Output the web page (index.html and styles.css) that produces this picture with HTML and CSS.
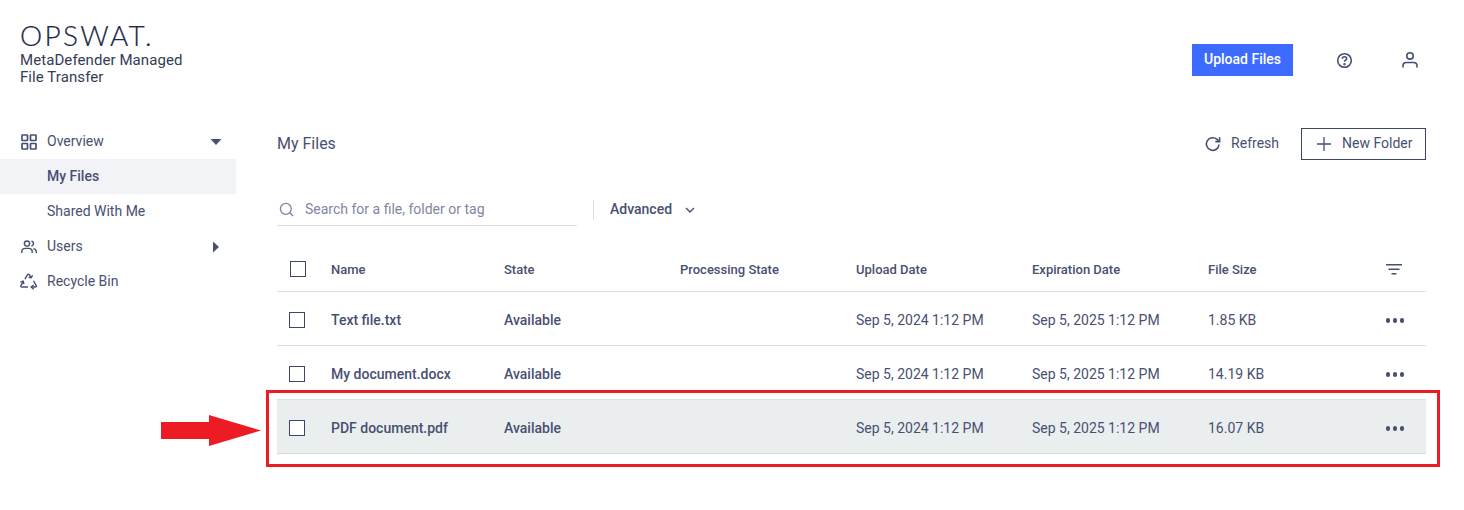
FILE: index.html
```html
<!DOCTYPE html>
<html lang="en">
<head>
<meta charset="utf-8">
<title>My Files</title>
<link rel="stylesheet" href="styles.css">
</head>
<body>
<div class="app">
  <aside class="sidebar">
    <div class="brand">
      <div class="logo">OPSWAT.</div>
      <div class="product">MetaDefender Managed<br>File Transfer</div>
    </div>
    <nav class="nav">
      <div class="nav-item">
        <svg class="nav-icon" viewBox="0 0 16 16" fill="none" stroke="currentColor" stroke-width="1.7"><rect x="1" y="1" width="5.500" height="5.500" rx=".5"/><rect x="9.500" y="1" width="5.500" height="5.500" rx=".5"/><rect x="1" y="9.500" width="5.500" height="5.500" rx=".5"/><rect x="9.500" y="9.500" width="5.500" height="5.500" rx=".5"/></svg>
        <span>Overview</span>
        <svg class="caret" viewBox="0 0 12 12" fill="currentColor"><path d="M.5 3h11L6 9z"/></svg>
      </div>
      <div class="nav-item active"><span>My Files</span></div>
      <div class="nav-item"><span>Shared With Me</span></div>
      <div class="nav-item">
        <svg class="nav-icon" viewBox="0 0 16 16" fill="none" stroke="currentColor" stroke-width="1.400"><circle cx="6" cy="4.600" r="2.600"/><path d="M.8 14v-1.200c0-2 1.600-3.400 3.600-3.400h3.200c2 0 3.600 1.400 3.600 3.400V14"/><path d="M10.400 2.200c1.300.2 2.100 1.200 2.100 2.400s-.8 2.200-2.100 2.400"/><path d="M12.400 9.600c1.700.3 2.900 1.600 2.900 3.200V14"/></svg>
        <span>Users</span>
        <svg class="caret" viewBox="0 0 12 12" fill="currentColor"><path d="M3 .5v11L9 6z"/></svg>
      </div>
      <div class="nav-item">
        <svg class="nav-icon recycle" viewBox="0 0 20 20" fill="none" stroke="currentColor" stroke-width="1.500"><path d="M6.200 7.600 9 2.800c.4-.7 1.500-.7 1.900 0l1.800 3"/><path d="M14.300 3.600l-1.500 2.400-2.700-.5"/><path d="M15.200 9.200l3 5.100c.4.700-.1 1.500-.9 1.500h-3.500"/><path d="M15.500 18.200l-2.700-2.400 2.600-2.100"/><path d="M9.500 15.800H2.900c-.8 0-1.300-.8-.9-1.500l2.300-4"/><path d="M1.400 10.600l3-.9.800 3"/></svg>
        <span>Recycle Bin</span>
      </div>
    </nav>
  </aside>

  <div class="content">
    <header class="topbar">
      <button class="upload">Upload Files</button>
      <svg class="top-icon help" viewBox="0 0 18 18" fill="none" stroke="currentColor" stroke-width="1.700"><circle cx="9" cy="9" r="7.200"/><path d="M6.700 7.100c0-1.300 1-2.100 2.300-2.100s2.300.8 2.300 2c0 1.700-2.300 1.700-2.300 3.400"/><circle cx="9" cy="12.900" r=".5" fill="currentColor"/></svg>
      <svg class="top-icon user" viewBox="0 0 18 18" fill="none" stroke="currentColor" stroke-width="1.600"><circle cx="9" cy="4.900" r="3.200"/><path d="M2 16.500v-1.700c0-2 1.500-3.300 3.400-3.300h7.200c1.900 0 3.400 1.300 3.400 3.300v1.700"/></svg>
    </header>

    <main class="main">
      <div class="title-row">
        <h1 class="title">My Files</h1>
        <div class="actions">
          <button class="refresh">
            <svg class="refresh-icon" viewBox="0 0 16 16" fill="none" stroke="currentColor" stroke-width="1.600"><path d="M14 8.500A6.300 6.300 0 1 1 12 3.400L14.300 5.500"/><path d="M14.600 1.200v4.400h-4.300"/></svg>
            <span class="btn-label">Refresh</span>
          </button>
          <button class="new-folder">
            <svg class="plus" viewBox="0 0 14 14" fill="none" stroke="currentColor" stroke-width="1.300"><path d="M7 0v14M0 7h14"/></svg>
            <span class="btn-label">New Folder</span>
          </button>
        </div>
      </div>

      <div class="filters">
        <div class="search">
          <svg class="search-icon" viewBox="0 0 16 16" fill="none" stroke="currentColor" stroke-width="1.400"><circle cx="7.300" cy="7.300" r="5.800"/><path d="M11.500 11.500 15 15"/></svg>
          <span>Search for a file, folder or tag</span>
        </div>
        <div class="divider"></div>
        <div class="advanced">Advanced
          <svg class="chev" viewBox="0 0 10 6" fill="none" stroke="currentColor" stroke-width="1.400"><path d="M1 1l4 4 4-4"/></svg>
        </div>
      </div>

      <div class="table">
        <div class="row head">
          <span class="check"></span><span>Name</span><span>State</span><span>Processing State</span><span>Upload Date</span><span>Expiration Date</span><span>File Size</span>
          <svg class="filter" viewBox="0 0 16 12" fill="currentColor"><rect x="0" y="0" width="16" height="1.500"/><rect x="2.500" y="4.500" width="11" height="1.500"/><rect x="5.500" y="9" width="5" height="1.500"/></svg>
        </div>
        <div class="row">
          <span class="check"></span><span class="strong">Text file.txt</span><span class="strong">Available</span><span></span><span>Sep 5, 2024 1:12 PM</span><span>Sep 5, 2025 1:12 PM</span><span>1.85 KB</span>
          <span class="more"><i></i><i></i><i></i></span>
        </div>
        <div class="row">
          <span class="check"></span><span class="strong">My document.docx</span><span class="strong">Available</span><span></span><span>Sep 5, 2024 1:12 PM</span><span>Sep 5, 2025 1:12 PM</span><span>14.19 KB</span>
          <span class="more"><i></i><i></i><i></i></span>
        </div>
        <div class="row selected">
          <span class="check"></span><span class="strong">PDF document.pdf</span><span class="strong">Available</span><span></span><span>Sep 5, 2024 1:12 PM</span><span>Sep 5, 2025 1:12 PM</span><span>16.07 KB</span>
          <span class="more"><i></i><i></i><i></i></span>
        </div>
      </div>
    </main>
  </div>
</div>

<div class="callout-frame"></div>
<svg class="callout-arrow" viewBox="0 0 100 31" fill="#ed1c24"><path d="M0 7h48V0l52 15.500L48 31v-7H0z"/></svg>
</body>
</html>
```

FILE: styles.css
```css
* { box-sizing: border-box; }

html, body {
  margin: 0;
  height: 510px;
  overflow: hidden;
  background: #fff;
}

body {
  font-family: Roboto, "Liberation Sans", sans-serif;
  font-size: 14px;
  color: #485071;
}

button {
  font: inherit;
  color: inherit;
  background: none;
  border: 0;
  padding: 0;
}

.app {
  display: flex;
  height: 510px;
}

.sidebar {
  width: 236px;
  flex: none;
}

.brand {
  padding: 19px 0 0 20px;
  height: 124px;
}

.logo {
  font-family: Lato, sans-serif;
  font-weight: 300;
  font-size: 28px;
  line-height: 33px;
  letter-spacing: 2.300px;
  color: #1d2a44;
  -webkit-text-stroke: 0.2px #1d2a44;
}

.product {
  font-size: 15px;
  line-height: 17px;
  letter-spacing: 0.08px;
  color: #333c55;
}

.nav-item {
  display: flex;
  align-items: center;
  height: 35px;
  padding: 0 0 2px 47px;
  position: relative;
}

.nav-item.active {
  background: #f2f3f7;
  font-weight: 500;
}

.nav-icon {
  position: absolute;
  left: 21px;
  top: 10px;
  width: 16px;
  height: 16px;
}

.nav-icon.recycle {
  left: 19px;
  top: 8px;
  width: 19px;
  height: 19px;
}

.caret {
  position: absolute;
  left: 210px;
  top: 12px;
  width: 12px;
  height: 12px;
}

.content {
  flex: 1;
  min-width: 0;
}

.topbar {
  display: flex;
  align-items: center;
  justify-content: flex-end;
  height: 124px;
  padding: 44px 45px 48px 0;
}

.upload {
  width: 101px;
  height: 32px;
  padding-bottom: 2px;
  background: #3d6bff;
  color: #fff;
  font-weight: 500;
}

.top-icon {
  width: 18px;
  height: 18px;
}

.help {
  margin-left: 43px;
  width: 17px;
  height: 17px;
}

.user {
  margin-left: 48px;
}

.main {
  padding: 4px 38px 0 41px;
}

.title-row {
  display: flex;
  align-items: center;
  justify-content: space-between;
  height: 32px;
}

.title {
  margin: 0 0 2px;
  font-size: 16px;
  font-weight: 400;
}

.actions {
  display: flex;
  align-items: center;
  gap: 22px;
}

.refresh,
.new-folder {
  display: flex;
  align-items: center;
}

.btn-label {
  margin-bottom: 2px;
}

.refresh {
  gap: 10px;
}

.refresh-icon {
  width: 16px;
  height: 16px;
}

.new-folder {
  width: 125px;
  height: 32px;
  border: 1px solid #3c4668;
  padding-left: 15px;
  gap: 11px;
}

.plus {
  width: 14px;
  height: 14px;
}

.filters {
  display: flex;
  align-items: center;
  margin-top: 29px;
  height: 40px;
}

.search {
  display: flex;
  align-items: center;
  width: 300px;
  height: 32px;
  margin-top: 1px;
  border-bottom: 1px solid #dcdee8;
  padding-left: 2px;
  gap: 11px;
  color: #7f86a3;
}

.search-icon {
  width: 15px;
  height: 15px;
}

.divider {
  width: 1px;
  height: 20px;
  margin: 2px 16px 0;
  background: #dcdee8;
}

.advanced {
  display: flex;
  align-items: center;
  gap: 13px;
  font-weight: 500;
}

.chev {
  width: 10px;
  height: 6px;
  margin-top: 2px;
}

.table {
  margin-top: 18px;
}

.row {
  display: grid;
  grid-template-columns: 54px 173px 176px 176px 176px 176px 176px 1fr;
  align-items: center;
  height: 54px;
  padding-top: 2px;
  border-bottom: 1px solid #dcdee8;
  position: relative;
}

.row.head {
  height: 45px;
  padding-top: 0;
  font-size: 13px;
  font-weight: 500;
}

.row.selected {
  background: #ebeeef;
  border-bottom-color: #d6d9da;
}

.strong {
  font-weight: 500;
}

.check {
  display: block;
  width: 16px;
  height: 16px;
  margin-left: 12px;
  border: 1px solid #3c4668;
  background: #fff;
}

.row.head .check {
  margin-left: 13px;
}

.filter {
  width: 16px;
  height: 12px;
  justify-self: end;
  margin: 2px 24px 0 0;
}

.more {
  display: flex;
  justify-self: end;
  gap: 2.500px;
  margin: 2px 22px 0 0;
}

.more i {
  display: block;
  width: 4.500px;
  height: 4.500px;
  border-radius: 50%;
  background: #485071;
}

.callout-frame {
  position: absolute;
  left: 266px;
  top: 390px;
  width: 1174px;
  height: 77px;
  border: 3px solid #ed1c24;
}

.callout-arrow {
  position: absolute;
  left: 161px;
  top: 415px;
  width: 100px;
  height: 31px;
}
```
